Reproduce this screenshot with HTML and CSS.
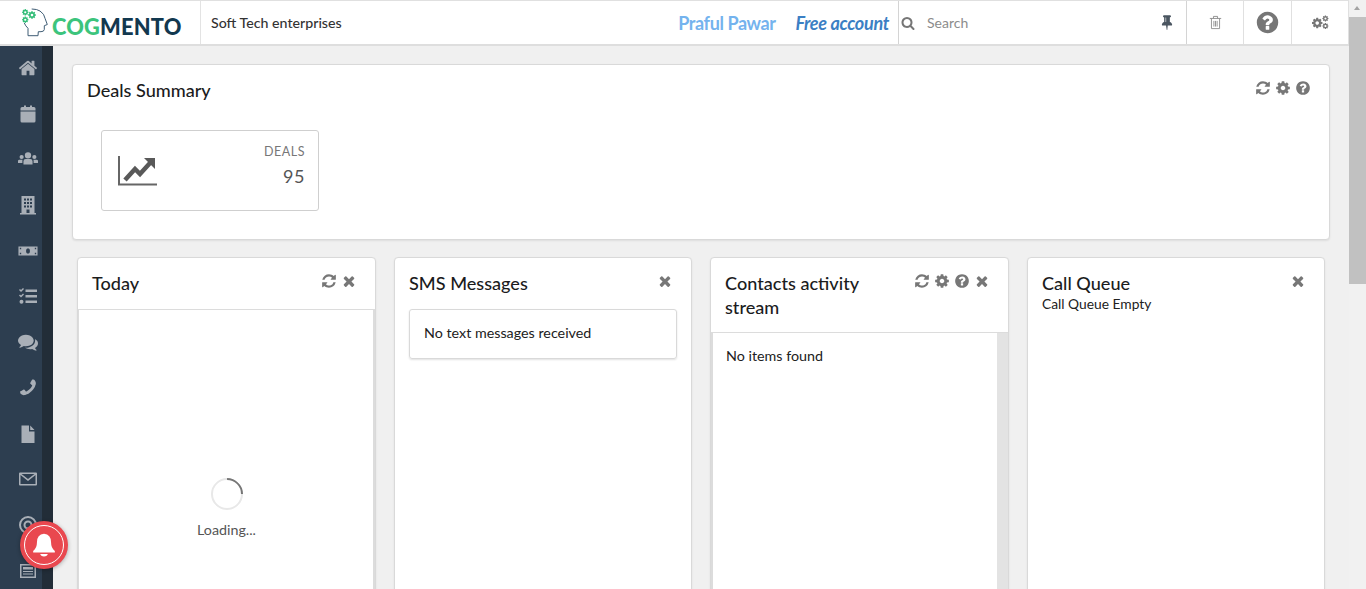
FILE: index.html
```html
<!DOCTYPE html>
<html lang="en">
  <head>
    <meta charset="utf-8" />
    <title>Cogmento</title>
    <link rel="stylesheet" href="styles.css">
  </head>
  <body>
    <svg class="icon-defs" width="0" height="0">
      <symbol id="i-refresh" viewBox="0 0 1792 1792"><path d="M1639 1056q0 5-1 7-64 268-268 434.5t-478 166.5q-146 0-282.5-55t-243.5-157l-129 129q-19 19-45 19t-45-19-19-45v-448q0-26 19-45t45-19h448q26 0 45 19t19 45-19 45l-137 137q71 66 161 102t187 36q134 0 250-65t186-179q11-17 53-117 8-23 30-23h192q13 0 22.5 9.5t9.5 22.5zm25-800v448q0 26-19 45t-45 19h-448q-26 0-45-19t-19-45 19-45l138-138q-148-137-349-137-134 0-250 65t-186 179q-11 17-53 117-8 23-30 23h-199q-13 0-22.5-9.5t-9.5-22.5v-7q65-268 270-434.5t480-166.5q146 0 284 55.5t245 156.5l130-129q19-19 45-19t45 19 19 45z"/></symbol>
      <symbol id="i-close" viewBox="0 0 1792 1792"><path d="M1490 1322q0 40-28 68l-136 136q-28 28-68 28t-68-28l-294-294-294 294q-28 28-68 28t-68-28l-136-136q-28-28-28-68t28-68l294-294-294-294q-28-28-28-68t28-68l136-136q28-28 68-28t68 28l294 294 294-294q28-28 68-28t68 28l136 136q28 28 28 68t-28 68l-294 294 294 294q28 28 28 68z"/></symbol>
      <symbol id="i-help" viewBox="0 0 1792 1792"><path d="M1024 1376v-192q0-14-9-23t-23-9h-192q-14 0-23 9t-9 23v192q0 14 9 23t23 9h192q14 0 23-9t9-23zm256-672q0-88-55.5-163t-138.5-116-170-41q-243 0-371 213-15 24 8 42l132 100q7 6 19 6 16 0 25-12 53-68 86-92 34-24 86-24 48 0 85.5 26t37.5 59q0 38-20 61t-68 45q-63 28-115.5 86.5t-52.5 125.5v36q0 14 9 23t23 9h192q14 0 23-9t9-23q0-19 21.5-49.5t54.5-49.5q32-18 49-28.5t46-35 44.5-48 28-60.5 12.5-81zm384 192q0 209-103 385.5t-279.5 279.5-385.5 103-385.5-103-279.5-279.5-103-385.5 103-385.5 279.5-279.5 385.5-103 385.5 103 279.5 279.5 103 385.5z"/></symbol>
      <symbol id="i-cog" viewBox="0 0 1792 1792"><path d="M1152 896q0-106-75-181t-181-75-181 75-75 181 75 181 181 75 181-75 75-181zm512-109v222q0 12-8 23t-20 13l-185 28q-19 54-39 91 35 50 107 138 10 12 10 25t-9 23q-27 37-99 108t-94 71q-12 0-26-9l-138-108q-44 23-91 38-16 136-29 186-7 28-36 28h-222q-14 0-24.5-8.5t-11.5-21.5l-28-184q-49-16-90-37l-141 107q-10 9-25 9-14 0-25-11-126-114-165-168-7-10-7-23 0-12 8-23 15-21 51-66.5t54-70.5q-27-50-41-99l-183-27q-13-2-21-12.5t-8-23.5v-222q0-12 8-23t19-13l186-28q14-46 39-92-40-57-107-138-10-12-10-24 0-10 9-23 26-36 98.5-107.5t94.5-71.5q13 0 26 10l138 107q44-23 91-38 16-136 29-186 7-28 36-28h222q14 0 24.5 8.5t11.5 21.5l28 184q49 16 90 37l142-107q9-9 24-9 13 0 25 10 129 119 165 170 7 8 7 22 0 12-8 23-15 21-51 66.5t-54 70.5q26 50 41 98l183 28q13 2 21 12.5t8 23.5z"/></symbol>
    </svg>

    <div class="page">
      <div class="app">
        <header class="topbar">
          <div class="brand">
            <svg class="brand-mark" viewBox="0 0 30 30" width="30" height="30">
              <path d="M9.700 1 Q15 1 18 3 Q22.500 6 23 10.300 L25.300 16.500 L22.300 17.700 L22.300 21.500 Q22 23.700 19 23.700 L16.300 23.700 L16 27.700 L6 27.700 L6 20.300 Q3.500 18 2.300 15" fill="none" stroke="#3f5d75" stroke-width="1"/>
              <use href="#i-cog" x="-0.500" y="0.500" width="7.500" height="7.500" fill="#33bd78"/>
              <use href="#i-cog" x="5.500" y="2.500" width="9" height="9" fill="#33bd78"/>
              <use href="#i-cog" x="-0.500" y="8" width="7.500" height="7.500" fill="#33bd78"/>
            </svg>
            <span class="brand-name"><span class="brand-green">COG</span>MENTO</span>
          </div>
          <div class="company">Soft Tech enterprises</div>
          <div class="account">
            <span class="user-name">Praful Pawar</span>
            <span class="plan">Free account</span>
          </div>
          <div class="search">
            <svg class="search-icon" viewBox="0 0 1792 1792" width="14" height="14"><path d="M1216 832q0-185-131.500-316.500t-316.500-131.500-316.500 131.500-131.500 316.500 131.500 316.500 316.500 131.500 316.500-131.500 131.500-316.500zm512 832q0 52-38 90t-90 38q-54 0-90-38l-343-342q-179 124-399 124-143 0-273.500-55.500t-225-150-150-225-55.500-273.500 55.500-273.500 150-225 225-150 273.500-55.500 273.500 55.500 225 150 150 225 55.500 273.500q0 220-124 399l343 343q37 37 37 90z"/></svg>
            <span class="search-text">Search</span>
            <svg class="pin" viewBox="0 0 1792 1792" width="16" height="16"><path d="M800 864v-448q0-14-9-23t-23-9-23 9-9 23v448q0 14 9 23t23 9 23-9 9-23zm672 352q0 26-19 45t-45 19h-429l-51 483q-2 12-10.500 20.500t-20.500 8.500h-1q-27 0-32-27l-76-485h-404q-26 0-45-19t-19-45q0-123 78.500-221.500t177.500-98.500v-512q-52 0-90-38t-38-90 38-90 90-38h640q52 0 90 38t38 90-38 90-90 38v512q99 0 177.500 98.500t78.500 221.500z"/></svg>
          </div>
          <div class="tool tool-trash">
            <svg viewBox="0 0 16 18" width="13" height="15" fill="none" stroke="#8a8a8a" stroke-width="1.100"><path d="M1 4 H15 M5.500 4 V1.500 H10.500 V4 M3 4 V16.500 H13 V4 M6 7 V14 M8 7 V14 M10 7 V14"/></svg>
          </div>
          <div class="tool tool-help">
            <svg viewBox="0 0 1792 1792" width="25" height="25" fill="#767676"><use href="#i-help"/></svg>
          </div>
          <div class="tool tool-cogs">
            <svg viewBox="0 0 20 16" width="19" height="15">
              <use href="#i-cog" x="0" y="2" width="13" height="13" fill="#767676"/>
              <use href="#i-cog" x="11.500" y="0" width="7.500" height="7.500" fill="#767676"/>
              <use href="#i-cog" x="11.500" y="8" width="7.500" height="7.500" fill="#767676"/>
            </svg>
          </div>
        </header>

        <div class="below">
          <nav class="sidebar">
            <div class="nav-rail">
              <svg viewBox="0 0 1792 1792"><path d="M1472 992v480q0 26-19 45t-45 19h-384v-384h-256v384h-384q-26 0-45-19t-19-45v-480q0-1 .5-3t.5-3l575-474 575 474q1 2 1 6zm223-69l-62 74q-8 9-21 11h-3q-13 0-21-7l-692-577-692 577q-12 8-24 7-13-2-21-11l-62-74q-8-10-7-23.500t11-21.500l719-599q32-26 76-26t76 26l244 204v-195q0-14 9-23t23-9h192q14 0 23 9t9 23v408l219 182q10 8 11 21.500t-7 23.500z"/></svg>
              <svg viewBox="0 0 20 20"><path d="M2.500 7.500 H17.500 V17 Q17.500 18.500 16 18.500 H4 Q2.500 18.500 2.500 17 Z M4 3 H6 V1.500 H8 V3 H12 V1.500 H14 V3 H16 Q17.500 3 17.500 4.500 V6.500 H2.500 V4.500 Q2.500 3 4 3 Z"/></svg>
              <svg viewBox="0 0 22 22"><path d="M11 3.500 A3.500 3.500 0 1 0 11 10.500 A3.500 3.500 0 1 0 11 3.500 Z M8.500 11 H13.500 Q16 11 16 13.500 V17 H6 V13.500 Q6 11 8.500 11 Z M4 6.500 A2.300 2.300 0 1 0 4 11.100 A2.300 2.300 0 1 0 4 6.500 Z M1.500 11.800 H5 Q4.800 12.800 4.800 13.500 V15.500 H0 V13.300 Q0 11.800 1.500 11.800 Z M18 6.500 A2.300 2.300 0 1 0 18 11.100 A2.300 2.300 0 1 0 18 6.500 Z M17 11.800 H20.500 Q22 11.800 22 13.300 V15.500 H17.200 V13.500 Q17.200 12.800 17 11.800 Z"/></svg>
              <svg viewBox="0 0 20 20"><path fill-rule="evenodd" d="M3.500 1 H16.500 V18 H18 V19.500 H2 V18 H3.500 Z M6 3.500 V5.500 H8 V3.500 Z M9 3.500 V5.500 H11 V3.500 Z M12 3.500 V5.500 H14 V3.500 Z M6 7 V9 H8 V7 Z M9 7 V9 H11 V7 Z M12 7 V9 H14 V7 Z M6 10.500 V12.500 H8 V10.500 Z M9 10.500 V12.500 H11 V10.500 Z M12 10.500 V12.500 H14 V10.500 Z M8.500 14.500 V18 H11.500 V14.500 Z"/></svg>
              <svg viewBox="0 0 22 20"><path fill-rule="evenodd" d="M0.500 5 H21.500 V15 H0.500 Z M11 7 A2.200 3 0 1 0 11 13 A2.200 3 0 1 0 11 7 Z M2 6.500 V8 H3.500 V6.500 Z M18.500 6.500 V8 H20 V6.500 Z M2 12 V13.500 H3.500 V12 Z M18.500 12 V13.500 H20 V12 Z"/></svg>
              <svg viewBox="0 0 20 20"><path d="M7.500 3.500 H19 V6 H7.500 Z M7.500 9 H19 V11.500 H7.500 Z M7.500 14.500 H19 V17 H7.500 Z M1 4 L2 3 L3 4 L5 2 L6 3 L3 6 Z M1 9.500 L2 8.500 L3 9.500 L5 7.500 L6 8.500 L3 11.500 Z M3.500 13.800 A2 2 0 1 0 3.500 17.800 A2 2 0 1 0 3.500 13.800 Z"/></svg>
              <svg viewBox="0 0 1792 1792"><path d="M1408 768q0 139-94 257t-256.500 186.500-353.500 68.500q-86 0-176-16-124 88-278 128-36 9-86 16h-3q-11 0-20.500-8t-11.500-21q-1-3-1-6.500t.5-6.500 2-6l2.500-5 3.500-5.500 4-5 4.500-5 4-4.500q5-6 23-25t26-29.500 22.500-29 25-38.500 20.500-44q-124-72-195-177t-71-224q0-139 94-257t256.500-186.500 353.500-68.500 353.500 68.500 256.500 186.500 94 257zm384 256q0 120-71 224.500t-195 176.500q10 24 20.500 44t25 38.500 22.500 29 26 29.500 23 25q1 1 4 4.500t4.500 5 4 5 3.500 5.500l2.500 5 2 6 .5 6.500-1 6.500q-3 14-13 22t-22 7q-50-7-86-16-154-40-278-128-90 16-176 16-271 0-472-132 58 4 88 4 161 0 309-45t264-129q125-92 192-212t67-254q0-77-23-152 129 71 204 178t75 230z"/></svg>
              <svg class="flip" viewBox="0 0 1792 1792"><path d="M1600 1240q0 27-10 70.500t-21 68.500q-21 50-122 106-94 51-186 51-27 0-53-3.500t-57.500-12.500-47-14.500-55.500-20.500-49-18q-98-35-175-83-127-79-264-216t-216-264q-48-77-83-175-3-9-18-49t-20.500-55.500-14.500-47-12.500-57.500-3.500-53q0-92 51-186 56-101 106-122 25-11 68.500-21t70.500-10q14 0 21 3 18 6 53 76 11 19 30 54t35 63.500 31 53.500q3 4 17.500 25t21.500 35.500 7 28.500q0 20-28.500 50t-62 55-62 53-28.500 46q0 9 5 22.500t8.500 20.500 14 24 11.500 19q76 137 174 235t235 174q2 1 19 11.500t24 14 20.500 8.500 22.500 5q18 0 46-28.500t53-62 55-62 50-28.500q14 0 28.500 7t35.500 21.500 25 17.500q25 15 53.500 31t63.500 35 54 30q70 35 76 53 3 7 3 21z"/></svg>
              <svg viewBox="0 0 20 20"><path d="M3.500 1.500 H11 V7.500 H16.500 V19 H3.500 Z M12.200 1.500 L16.500 6 H12.200 Z"/></svg>
              <svg viewBox="0 0 20 20"><path fill-rule="evenodd" d="M2 3.500 H18 Q19 3.500 19 4.500 V15.500 Q19 16.500 18 16.500 H2 Q1 16.500 1 15.500 V4.500 Q1 3.500 2 3.500 Z M3.500 5 L10 10 L16.500 5 Z M2.500 6 V15 H17.500 V6 L10 12 Z"/></svg>
              <svg viewBox="0 0 20 20"><path fill-rule="evenodd" d="M10 1 A9 9 0 1 0 10 19 A9 9 0 1 0 10 1 Z M10 3 A7 7 0 1 1 10 17 A7 7 0 1 1 10 3 Z M10 5.500 A4.500 4.500 0 1 0 10 14.500 A4.500 4.500 0 1 0 10 5.500 Z M10 7.500 A2.500 2.500 0 1 1 10 12.500 A2.500 2.500 0 1 1 10 7.500 Z"/></svg>
              <svg viewBox="0 0 20 20"><path fill-rule="evenodd" d="M2 3 H18 V17 H2 Z M3.500 4.500 V15.500 H16.500 V4.500 Z M5 6 H15 V8.500 H5 Z M5 10 H15 V11 H5 Z M5 12.500 H15 V13.500 H5 Z"/></svg>
            </div>
            <div class="nav-edge"></div>
          </nav>

          <main class="content">
            <section class="panel summary">
              <div class="panel-head">
                <h3 class="panel-title">Deals Summary</h3>
                <div class="actions">
                  <svg><use href="#i-refresh"/></svg>
                  <svg><use href="#i-cog"/></svg>
                  <svg><use href="#i-help"/></svg>
                </div>
              </div>
              <div class="stat">
                <svg class="stat-icon" viewBox="0 0 40 32" width="40" height="32">
                  <path class="chart-axis" d="M1 1 V29.500 H39"/>
                  <path class="chart-line" d="M7 25 L17 14 L22 19 L32 8"/>
                  <path class="chart-head" d="M26 3 H37 V14 Z"/>
                </svg>
                <div class="stat-text">
                  <div class="stat-label">DEALS</div>
                  <div class="stat-value">95</div>
                </div>
              </div>
            </section>

            <div class="columns">
              <section class="panel column">
                <div class="panel-head ruled">
                  <h3 class="panel-title">Today</h3>
                  <div class="actions">
                    <svg><use href="#i-refresh"/></svg>
                    <svg><use href="#i-close"/></svg>
                  </div>
                </div>
                <div class="panel-body today-body">
                  <div class="spinner"></div>
                  <div class="spinner-text">Loading...</div>
                </div>
              </section>

              <section class="panel column">
                <div class="panel-head">
                  <h3 class="panel-title">SMS Messages</h3>
                  <div class="actions">
                    <svg><use href="#i-close"/></svg>
                  </div>
                </div>
                <div class="message-box">No text messages received</div>
              </section>

              <section class="panel column">
                <div class="panel-head ruled stream-head">
                  <h3 class="panel-title">Contacts activity stream</h3>
                  <div class="actions">
                    <svg><use href="#i-refresh"/></svg>
                    <svg><use href="#i-cog"/></svg>
                    <svg><use href="#i-help"/></svg>
                    <svg><use href="#i-close"/></svg>
                  </div>
                </div>
                <div class="panel-body stream-body">
                  <div class="stream-list">No items found</div>
                  <div class="stream-track"></div>
                </div>
              </section>

              <section class="panel column">
                <div class="panel-head queue-head">
                  <div>
                    <h3 class="panel-title">Call Queue</h3>
                    <div class="queue-note">Call Queue Empty</div>
                  </div>
                  <div class="actions">
                    <svg><use href="#i-close"/></svg>
                  </div>
                </div>
              </section>
            </div>
          </main>
        </div>
      </div>

      <div class="scrollbar">
        <div class="scroll-up"></div>
        <div class="scroll-thumb"></div>
      </div>
    </div>

    <div class="bell">
      <div class="bell-ring">
        <svg viewBox="0 0 24 24" width="26" height="26" fill="#fff"><path d="M12 1.500 Q18.500 2 18.500 9.500 Q18.500 15 22 17.500 V19 H2 V17.500 Q5.500 15 5.500 9.500 Q5.500 2 12 1.500 Z M8.500 20.200 H15.500 Q15 22.500 12 22.500 Q9 22.500 8.500 20.200 Z"/></svg>
      </div>
    </div>
  </body>
</html>
```

FILE: styles.css
```css
html, body {
  margin: 0;
  height: 100%;
  overflow: hidden;
}
body {
  font-family: "Lato", sans-serif;
  font-size: 14.3px;
  color: #212121;
  background-color: #f0f0f0;
}
.icon-defs {
  position: absolute;
}

.page {
  display: flex;
  height: 589px;
}
.app {
  flex: 1;
  display: flex;
  flex-direction: column;
  min-width: 0;
}

/* top bar */
.topbar {
  display: flex;
  align-items: stretch;
  height: 43px;
  flex: none;
  background-color: white;
  border-top: 1px solid #e0e0e0;
  border-bottom: 2px solid #dedede;
}
.brand {
  width: 201px;
  box-sizing: border-box;
  padding-left: 22px;
  display: flex;
  align-items: center;
  border-right: 1px solid #e3e3e3;
}
.brand-mark {
  flex: none;
}
.brand-name {
  font-weight: 900;
  font-size: 21.800px;
  letter-spacing: 0.2px;
  color: #12384f;
  margin-top: 7px;
}
.brand-green {
  color: #3cc47c;
}
.company {
  padding-left: 10px;
  display: flex;
  align-items: center;
  font-size: 14.200px;
  font-weight: 500;
  color: #333;
  flex: 1;
}
.account {
  display: flex;
  align-items: center;
  gap: 20px;
  padding-right: 9px;
  font-size: 18px;
  font-weight: 700;
  letter-spacing: -0.4px;
}
.user-name {
  color: #74b3ee;
}
.plan {
  color: #3b7fc4;
  font-style: italic;
  letter-spacing: -0.3px;
}
.search {
  width: 289px;
  box-sizing: border-box;
  border-left: 1px solid #d4d4d4;
  border-right: 1px solid #d4d4d4;
  display: flex;
  align-items: center;
  padding-left: 2px;
  padding-right: 11px;
}
.search-icon {
  fill: #767676;
}
.search-text {
  margin-left: 12px;
  color: #8c8c8c;
  font-size: 14px;
  flex: 1;
}
.pin {
  fill: #4a5560;
  margin-top: -2px;
}
.tool {
  display: flex;
  align-items: center;
  justify-content: center;
  box-sizing: border-box;
  border-right: 1px solid #e0e0e0;
}
.tool-trash {
  width: 57px;
}
.tool-help {
  width: 48px;
}
.tool-cogs {
  width: 57px;
}

.below {
  flex: 1;
  display: flex;
  min-height: 0;
  overflow: hidden;
}

/* left nav */
.sidebar {
  width: 53px;
  flex: none;
  display: flex;
}
.nav-rail {
  width: 42px;
  background-color: #2d3e50;
  padding-top: 12px;
  box-sizing: border-box;
  display: flex;
  flex-direction: column;
  align-items: center;
  padding-left: 14px;
  gap: 25.700px;
}
.nav-rail svg {
  width: 20px;
  height: 20px;
  flex: none;
  fill: #a9afb7;
}
.nav-rail .flip {
  transform: scaleX(-1);
}
.nav-edge {
  width: 11px;
  background-color: #222d38;
}

/* main area */
.content {
  flex: 1;
  min-width: 0;
  padding: 18px 19px 0 19px;
}
.panel {
  background-color: white;
  border: 1px solid #d9d9d9;
  border-radius: 4px;
  box-sizing: border-box;
  box-shadow: 0 1px 2px rgba(0, 0, 0, 0.08);
}
.panel-head {
  display: flex;
  justify-content: space-between;
  padding: 13px 18px 14px 14px;
}
.panel-title {
  margin: 0;
  font-size: 18.100px;
  font-weight: 500;
  line-height: 24px;
  color: #1b1c1d;
}
.actions {
  display: flex;
  gap: 4px;
  flex: none;
  margin-top: 2px;
}
.actions svg {
  width: 16px;
  height: 16px;
  fill: #777;
}
.ruled {
  border-bottom: 1px solid #dcdcdc;
}
.stream-head {
  padding-bottom: 13px;
}

.summary {
  height: 176px;
}
.summary .panel-head {
  padding: 14px 18px 0 14px;
}
.summary .panel-title {
  line-height: 22px;
}
.summary .actions {
  margin-top: 1px;
}
.stat {
  width: 218px;
  height: 81px;
  box-sizing: border-box;
  margin: 29px 0 0 28px;
  border: 1px solid #cfcfcf;
  border-radius: 3px;
  display: flex;
  align-items: center;
  justify-content: space-between;
  padding: 0 13px 0 16px;
}
.stat-icon {
  flex: none;
  margin-top: 1px;
}
.chart-axis {
  fill: none;
  stroke: #666;
  stroke-width: 2;
}
.chart-line {
  fill: none;
  stroke: #595959;
  stroke-width: 4.500;
}
.chart-head {
  fill: #595959;
}
.stat-text {
  text-align: right;
  padding-bottom: 10px;
}
.stat-label {
  font-size: 12.500px;
  letter-spacing: 0.5px;
  color: #777;
}
.stat-value {
  font-size: 18px;
  color: #555;
  margin-top: 6px;
  letter-spacing: 0.5px;
}

.columns {
  display: grid;
  grid-template-columns: 299px 298px 299px 298px;
  gap: 18px;
  margin: 17px 0 0 5px;
}
.column {
  height: 400px;
}
.panel-body {
  height: 300px;
}
.today-body {
  display: flex;
  flex-direction: column;
  align-items: center;
  padding: 168px 0 0 1px;
  box-sizing: border-box;
  border-left: 1px solid #dcdcdc;
  border-right: 2px solid #dcdcdc;
}
.spinner {
  width: 28px;
  height: 28px;
  border-radius: 50%;
  border: 2px solid #e8e8e8;
  border-top-color: #767676;
  transform: rotate(45deg);
}
.spinner-text {
  margin-top: 11px;
  color: #555;
}
.message-box {
  margin: 0 14px;
  height: 50px;
  box-sizing: border-box;
  padding: 14px 14px 0 14px;
  border: 1px solid #d9d9d9;
  border-radius: 3px;
  box-shadow: 0 1px 2px rgba(0, 0, 0, 0.12);
}
.stream-body {
  display: flex;
  border-left: 2px solid #dcdcdc;
}
.stream-list {
  flex: 1;
  padding: 14px 0 0 13px;
}
.stream-track {
  width: 11px;
  background-color: #e3e3e3;
}
.queue-head {
  padding-bottom: 0;
}
.queue-note {
  line-height: 18px;
  font-size: 13.800px;
}

/* page scrollbar */
.scrollbar {
  width: 17px;
  flex: none;
  background-color: #f1f1f1;
  display: flex;
  flex-direction: column;
}
.scroll-up {
  height: 17px;
  box-sizing: border-box;
  position: relative;
}
.scroll-up::before {
  content: "";
  position: absolute;
  left: 5px;
  top: 6px;
  border-left: 3.500px solid transparent;
  border-right: 3.500px solid transparent;
  border-bottom: 4px solid #a3a3a3;
}
.scroll-thumb {
  height: 267px;
  background-color: #c1c1c1;
}

/* notification bell, floats over the nav */
.bell {
  position: absolute;
  left: 20px;
  top: 521px;
  width: 48px;
  height: 48px;
  border-radius: 50%;
  background-color: #e9484f;
  box-shadow: 0 1px 4px rgba(0, 0, 0, 0.3);
  display: flex;
  align-items: center;
  justify-content: center;
}
.bell-ring {
  width: 38px;
  height: 38px;
  border: 1.500px solid white;
  border-radius: 50%;
  display: flex;
  align-items: center;
  justify-content: center;
}
```
